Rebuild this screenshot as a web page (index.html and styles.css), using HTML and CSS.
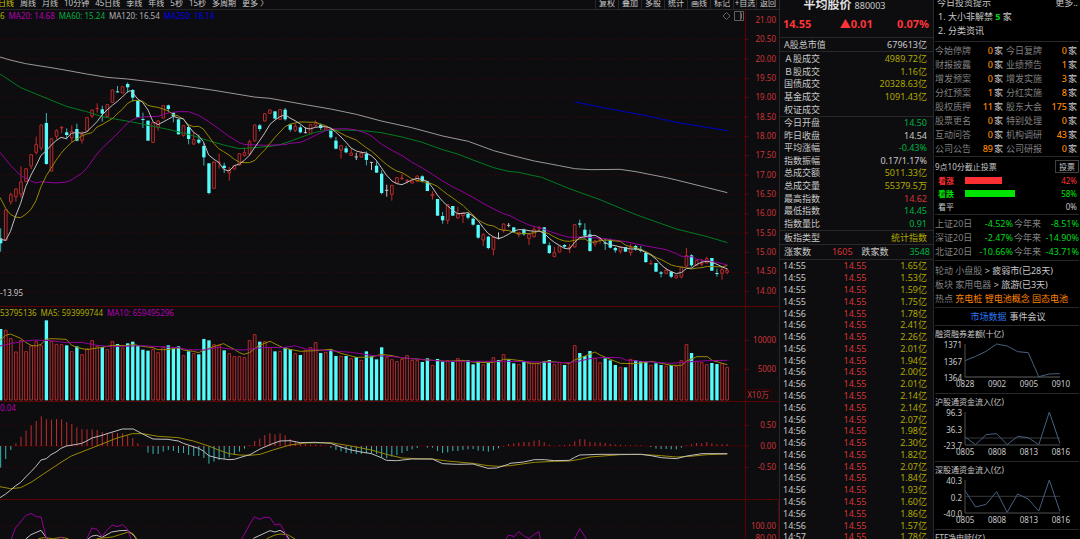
FILE: index.html
```html
<!DOCTYPE html>
<html lang="zh-CN">
<head>
<meta charset="utf-8">
<title>平均股价 880003</title>
<link rel="stylesheet" href="styles.css">
</head>
<body>
<main class="terminal">
  <section class="charts">
    <nav class="toolbar">
      <div class="periods">
        <button class="active">日线</button><button>周线</button><button>月线</button><button>10分钟</button><button>45日线</button><button>季线</button><button>年线</button><button>5秒</button><button>15秒</button><button>多周期</button><button>更多 〉</button>
      </div>
      <div class="tools">
        <button>复权</button><button>叠加</button><button>多股</button><button>统计</button><button>画线</button><button>标记</button><button>+自选</button><button>返回</button>
      </div>
    </nav>
    <div class="pane">
      <div class="plot">
        <svg id="price" viewBox="0 30 2235 888" preserveAspectRatio="none"></svg>
        <p class="legend"><span class="y">6</span><span class="m">MA20: 14.68</span><span class="g">MA60: 15.24</span><span class="w">MA120: 16.54</span><span class="b">MA250: 18.14</span></p>
        <svg class="marks" viewBox="0 0 22 12" width="22" height="12"><path d="M4.500 2.500L8 6L4.500 9.500L1 6Z"/><path d="M12.500 1.500H21.500V10.500H12.500ZM18.500 1.500V10.500"/><path class="bar" d="M19 3H20V9H19Z"/></svg>
        <span class="low">-13.95</span>
      </div>
      <div class="axis axis-price"><span>21.00</span><span>20.50</span><span>20.00</span><span>19.50</span><span>19.00</span><span>18.50</span><span>18.00</span><span>17.50</span><span>17.00</span><span>16.50</span><span>16.00</span><span>15.50</span><span>15.00</span><span>14.50</span><span>14.00</span></div>
    </div>
    <div class="pane">
      <div class="plot">
        <svg id="volume" viewBox="0 21 2235 282" preserveAspectRatio="none"></svg>
        <p class="legend top"><span class="y">53795136</span><span class="y">MA5: 593999744</span><span class="m">MA10: 659495296</span></p>
      </div>
      <div class="axis axis-volume"><span>10000</span><span>5000</span><span class="unit">X10万</span></div>
    </div>
    <div class="pane">
      <div class="plot">
        <svg id="macd" viewBox="0 306 2235 291" preserveAspectRatio="none"></svg>
        <p class="legend top"><span class="m">0.04</span></p>
      </div>
      <div class="axis axis-macd"><span>0.50</span><span>0.00</span><span>-0.50</span></div>
    </div>
    <div class="pane last">
      <div class="plot"><svg id="kdj" viewBox="0 600 2235 117" preserveAspectRatio="none"></svg></div>
      <div class="axis axis-kdj"><span>100.00</span><span>80.00</span></div>
    </div>
  </section>

  <section class="quote">
    <header class="head">
      <h1>平均股价 <small>880003</small></h1>
      <p class="last-price"><b>14.55</b><b>▲0.01</b><b>0.07%</b></p>
    </header>
    <dl class="one"><dt>A股总市值</dt><dd>679613亿</dd></dl>
    <dl class="turnover"><dt>Ａ股成交</dt><dd class="y">4989.72亿</dd><dt>Ｂ股成交</dt><dd class="y">1.16亿</dd><dt>国债成交</dt><dd class="y">20328.63亿</dd><dt>基金成交</dt><dd class="y">1091.43亿</dd><dt>权证成交</dt><dd></dd></dl>
    <dl class="stats"><dt>今日开盘</dt><dd class="g">14.50</dd><dt>昨日收盘</dt><dd>14.54</dd><dt>平均涨幅</dt><dd class="g">-0.43%</dd><dt>指数振幅</dt><dd>0.17/1.17%</dd><dt>总成交额</dt><dd class="y">5011.33亿</dd><dt>总成交量</dt><dd class="y">55379.5万</dd><dt>最高指数</dt><dd class="r">14.62</dd><dt>最低指数</dt><dd class="g">14.45</dd><dt>指数量比</dt><dd class="g">0.91</dd></dl>
    <dl class="one"><dt>板指类型</dt><dd class="y">统计指数</dd></dl>
    <p class="breadth"><span>涨家数</span><span class="r">1605</span><span>跌家数</span><span class="g">3548</span></p>
    <div class="ticks"><table><tbody id="ticks"></tbody></table></div>
  </section>

  <aside class="info">
    <section class="tips">
      <p class="split"><span>今日投资提示</span><a href="#">更多..</a></p>
      <p class="item">1. 大小非解禁 <b class="up">5</b> 家</p>
      <p class="item">2. 分类资讯</p>
    </section>
    <section class="events" id="events"></section>
    <section class="vote">
      <p class="split"><span>9点10分截止投票</span><button>投票</button></p>
      <p class="choice red"><b>看涨</b><i><i class="fill" style="width:42%"></i></i><span>42%</span></p>
      <p class="choice green"><b>看跌</b><i><i class="fill" style="width:58%"></i></i><span>58%</span></p>
      <p class="choice"><span>看平</span><i></i><span>0%</span></p>
    </section>
    <section class="returns">
      <span>上证20日</span><b>-4.52%</b><span>今年来</span><b>-8.51%</b>
      <span>深证20日</span><b>-2.47%</b><span>今年来</span><b>-14.90%</b>
      <span>北证20日</span><b>-10.66%</b><span>今年来</span><b>-43.71%</b>
    </section>
    <section class="sectors">
      <p>轮动 小盘股 <em>&gt; 疲弱市(已28天)</em></p>
      <p>板块 家用电器 <em>&gt; 旅游(已3天)</em></p>
      <p>热点 <a href="#">充电桩</a> <a href="#">锂电池概念</a> <a href="#">固态电池</a></p>
    </section>
    <nav class="tabs"><button class="on">市场数据</button><button>事件会议</button></nav>
    <div id="minis"></div>
    <section class="mini"><h2>ETF净申赎(亿)</h2></section>
  </aside>
</main>
<script src="script.js"></script>
</body>
</html>
```
FILE: styles.css
```css
* { box-sizing: border-box; margin: 0; padding: 0; }
body {
  background: #0d0d0f;
  color: #c8c8c8;
  font: 9px/12px "Noto Sans", "Noto Sans CJK SC", sans-serif;
  overflow: hidden;
}
button { background: none; border: 0; color: inherit; font: inherit; white-space: nowrap; }
a { color: inherit; text-decoration: none; }
svg { display: block; }

.y { color: #b0a800; }
.m { color: #b400b4; }
.g { color: #00b044; }
.r { color: #d83438; }
.w { color: #b0b0b0; }
.b { color: #0000e8; }

.terminal {
  display: grid;
  grid-template-columns: minmax(0, 1fr) 154px 147px;
  height: 100vh;
}

/* chart column */
.charts {
  display: grid;
  grid-template-rows: 10px 297fr 95fr 98fr 39fr;
  min-height: 0;
}
.toolbar {
  display: flex;
  justify-content: space-between;
  align-items: flex-end;
  overflow: hidden;
  border-bottom: 1px solid #28282a;
  font-size: 8px;
  line-height: 12px;
}
.periods { display: flex; gap: 6px; margin-left: -2px; }
.periods .active { color: #c8c000; }
.tools { display: flex; }
.tools button { width: 23px; border-left: 1px solid #28282a; }

.pane {
  display: grid;
  grid-template-columns: minmax(0, 1fr) 34px;
  min-height: 0;
  border-bottom: 1px solid #5c0003;
}
.pane.last { border-bottom: 0; }
.plot { position: relative; min-height: 0; min-width: 0; }
.plot > svg:first-child { width: 100%; height: 100%; position: absolute; overflow: visible; }
.last .plot > svg:first-child { overflow: hidden; }
.legend {
  position: absolute;
  top: 0;
  left: 0;
  display: flex;
  gap: 4px;
  font-size: 8px;
  white-space: nowrap;
}
.low { position: absolute; left: 0; bottom: 7px; font-size: 8px; }
.marks { position: absolute; right: 1px; top: 0; fill: none; stroke: #606060; }
.marks .bar { fill: #606060; stroke: none; }

.axis {
  display: flex;
  flex-direction: column;
  align-items: flex-end;
  padding-right: 3px;
  min-height: 0;
  overflow: hidden;
  border-left: 1px solid #5c0003;
  color: #cc3438;
  font-size: 8px;
  line-height: 10px;
}
.axis-price { justify-content: space-between; padding-top: 5px; padding-bottom: 10px; }
.axis-volume { padding-top: 28px; gap: 19px; }
.axis-volume .unit { margin-top: -4px; padding: 0 2px 0 1px; margin-right: 4px; border-top: 1px solid #3c0003; border-right: 1px solid #3c0003; white-space: nowrap; }
.axis-macd { padding-top: 18px; gap: 11px; }
.axis-kdj { padding-top: 21px; gap: 2px; border-right: 1px solid #5c0003; padding-right: 2px; }

/* svg marks */
svg .grid { stroke: #42060a; stroke-width: 1; stroke-dasharray: 1 2; fill: none; vector-effect: non-scaling-stroke; }
svg .tickmark { stroke: #6c0408; stroke-width: 1; vector-effect: non-scaling-stroke; }
svg .zeroline { stroke: #400406; stroke-width: 1; vector-effect: non-scaling-stroke; }
svg .line { fill: none; stroke-width: 1; vector-effect: non-scaling-stroke; }
svg .up { fill: #0d0d0f; stroke: #b82a2c; stroke-width: 1; vector-effect: non-scaling-stroke; }
svg .down { fill: #54fcfc; }
svg .wick { stroke-width: 1; vector-effect: non-scaling-stroke; }
svg .wick.u { stroke: #c02c2e; }
svg .wick.d { stroke: #3cb4b4; }
svg .wick.n { stroke: #c0c0c0; }

/* quote column */
.quote {
  display: flex;
  flex-direction: column;
  min-height: 0;
  overflow: hidden;
  border-left: 1px solid #28282a;
  line-height: 12px;
}
.head { height: 38px; border-bottom: 1px solid #28282a; overflow: hidden; }
.head h1 { margin-top: -5px; text-align: center; font-size: 12px; line-height: 19px; color: #e0e0e0; padding-right: 24px; }
.head small { font-size: 9px; font-weight: 400; color: #c8c8c8; }
.last-price { display: flex; justify-content: space-between; padding: 0 4px 0 3px; font-size: 11px; line-height: 18px; color: #ff3438; }
.last-price b:nth-child(2) { padding-left: 4px; }
.quote dl {
  display: grid;
  grid-template-columns: auto 1fr;
  grid-auto-rows: 1fr;
  align-items: center;
  flex: none;
  padding: 0 6px 0 4px;
  border-bottom: 1px solid #28282a;
}
.quote dd { text-align: right; }
.quote .one { height: 14px; }
.quote .turnover { height: 65px; padding-top: 1px; }
.quote .stats { height: 114px; }
.breadth { display: flex; justify-content: space-between; padding: 0 3px 0 4px; height: 15px; line-height: 14px; flex: none; border-bottom: 1px solid #28282a; }
.breadth span:nth-child(2) { margin-left: 12px; }
.breadth span:nth-child(4) { margin-left: 12px; }
.ticks { flex: 1; min-height: 0; overflow: hidden; padding: 0 6px 0 3px; }
.ticks table { width: 100%; height: calc(100% + 4px); border-collapse: collapse; line-height: 11px; }
.ticks td { width: 33%; padding: 0; }
.ticks td:nth-child(2) { text-align: center; color: #d83438; }
.ticks td:nth-child(3) { text-align: right; color: #b0a800; }

/* information column */
.info { background: #000; border-left: 1px solid #28282a; padding: 0 1px; min-height: 0; overflow: hidden; line-height: 14px; white-space: nowrap; }
.info > section, .tabs { border-bottom: 1px solid #28282a; }
.split { display: flex; justify-content: space-between; }
.tips { display: flow-root; height: 42px; }
.tips .split { margin-top: -4px; padding: 0 1px 0 2px; }
.tips .item { padding-left: 3px; }
.tips .up { color: #00d81c; }
.events { display: grid; grid-template-columns: auto 32px auto 1fr; padding-top: 2px; color: #808080; }
.events span:nth-child(even) { text-align: right; color: #c8c8c8; }
.events span:nth-child(4n+3) { padding-left: 3px; }
.events span:nth-child(4n) { padding-right: 2px; }
.events b { color: #ff8800; font-weight: 500; margin-right: 1px; }
.vote { height: 58px; padding-top: 3px; font-size: 8px; }
.vote button { width: 24px; height: 13px; border: 1px solid #404040; font-size: 8px; line-height: 11px; }
.choice { display: grid; grid-template-columns: 27px 87px 1fr; align-items: center; padding: 0 2px 0 3px; line-height: 13px; }
.choice > i { height: 7px; }
.fill { display: block; height: 100%; background: currentColor; }
.choice span:last-child { text-align: right; }
.choice.red { color: #ff3034; }
.choice.green { color: #00e400; }
.returns { display: grid; grid-template-columns: 39px 39px auto 1fr; padding: 2px 0 1px; color: #808080; }
.returns b { font-weight: 400; text-align: right; color: #00d81c; }
.returns span:nth-child(4n+3) { padding-left: 1px; }
.sectors { padding: 3px 0 1px; color: #808080; }
.sectors em { font-style: normal; color: #c8c8c8; }
.sectors a { color: #ff8400; }
.tabs { display: flex; justify-content: center; gap: 3px; height: 18px; padding-left: 2px; }
.tabs .on { color: #2c74f0; }
.mini { padding-top: 2px; height: 68px; border-bottom: 1px solid #28282a; font-size: 8px; }
.mini h2 { font-size: 8px; font-weight: 400; line-height: 12px; }
.mini .body { display: grid; grid-template-columns: 27px 1fr; column-gap: 3px; padding-right: 19px; }
.mini .ylabels { display: flex; flex-direction: column; justify-content: space-between; height: 42px; line-height: 9px; text-align: right; }
.mini svg { width: 100%; height: 33px; margin-top: 4px; overflow: visible; fill: none; }
.mini .frame { stroke: #505050; vector-effect: non-scaling-stroke; }
.mini .zero { stroke: #383838; vector-effect: non-scaling-stroke; }
.mini .trend { stroke: #486080; vector-effect: non-scaling-stroke; }
.mini .xlabels { display: flex; justify-content: space-between; margin: -3px 9px 0 21px; line-height: 10px; }
```
FILE: script.js
```js
// One drawing unit is a third of a pixel at the default window width.
const STEP = 15.24;
const xAt = i => 2 + STEP * i;

// kind (r rising, c falling, w unchanged), body top, body bottom, high, low
const candles = `c 715 730 685 755|r 628 722|r 583 606 578 614|r 566 591 566 605|r 545 583 499 593|r 505 546|r 463 499 463 508|r 433 458 410 463|r 374 445 374 452|c 369 492 339 494|r 415 514|r 391 410 388 417|r 381 385 378 400|c 397 405 385 418|r 393 415 376 427|c 387 422 371 424|r 403 422 393 431|r 352 394|r 329 349 329 354|r 324 327 310 338|c 328 341 317 365|r 313 350|r 269 308|c 274 277 258 278|r 259 280|c 252 262 247 278|c 270 293 267 305|c 302 352|c 357 360 338 384|c 362 422|r 367 428|r 362 383 360 392|r 316 355|c 316 327 314 337|c 338 349 336 367|c 358 403|r 376 407 376 410|c 381 417 376 433|r 418 433 396 435|c 419 428 404 432|c 438 472 430 497|c 490 579 490 583|r 485 566|r 486 489 461 506|c 497 504 488 519|r 510 520 501 542|r 495 508|r 460 496|r 457 467 443 470|r 424 463 419 467|r 374 424|c 376 387 372 394|r 340 364|r 329 341|c 334 356|r 328 359|c 329 358 324 362|c 373 389 371 395|r 378 392 371 396|c 382 397 376 400|w 398 398 382 400|r 373 402|r 368 377 361 381|c 374 384 370 390|r 382 389|c 387 412 385 416|c 422 446 411 448|r 436 451 436 476|c 445 457 438 460|r 458 467 445 467|w 471 471 458 480|r 459 472 453 474|c 462 480 454 496|w 487 487 486 510|c 497 518 485 518|c 521 579 511 583|w 571 571 554 590|r 555 584 555 602|r 532 550|r 533 536 521 540|r 541 544 537 550|r 542 550|r 527 545|c 529 543 526 547|c 544 573|r 582 588 574 599|c 597 647|c 648 661 636 671|r 613 662 613 672|c 618 647|r 641 655 620 655|r 638 648 636 669|c 642 653 636 658|c 656 674 652 677|c 675 713 673 716|r 703 721 700 738|c 710 744 708 748|r 710 749 710 766|w 715 715 697 718|r 671 691 671 698|w 676 676 669 682|c 682 697|r 696 704 696 712|c 689 703 686 707|r 702 716 702 735|r 688 711 680 713|r 682 686 678 692|c 682 731|c 736 759 727 762|r 757 771 741 771|r 737 757|c 735 740 733 745|r 741 745 732 759|r 673 742|c 670 674 659 683|c 689 707 670 715|c 703 753 689 755|r 722 733 720 740|r 718 722 712 731|c 728 731 716 750|c 720 743 716 745|c 744 751 740 758|r 741 754 738 761|c 741 755|r 742 759 732 767|c 738 748 735 752|c 748 752 738 757|c 759 786 757 789|r 789 793 780 793|c 789 815|c 817 821 813 832|r 810 821 803 823|c 815 830 813 834|r 825 835|r 801 832 801 835|r 766 799 744 801|c 766 796 763 800|r 780 797|r 789 794 777 799|r 775 790 770 790|c 774 812|c 819 822 806 830|r 808 821 800 839|r 810 818 804 823`
  .split('|').map(s => { const [k, ...n] = s.split(' '); const v = n.map(Number); return { k, t: v[0], b: v[1], h: v[2] ?? v[0], l: v[3] ?? v[1] }; });

const volumes = [87,90,115,155,121,154,137,124,136,61,123,132,133,136,154,139,163,145,121,139,141,148,124,132,143,130,125,135,149,152,148,157,140,136,146,139,166,154,160,163,117,121,133,136,151,160,169,169,172,121,103,125,124,142,154,153,142,147,160,165,150,142,127,159,156,148,168,168,168,175,171,180,154,169,178,142,172,178,184,177,166,180,181,186,175,195,177,185,181,186,175,183,181,193,183,193,189,172,180,163,178,190,193,184,186,190,190,184,180,193,187,195,187,136,159,168,153,174,187,175,181,195,202,202,177,181,183,183,195,190,195,198,195,198,181,133,159,183,187,193,189,192,190,201];
const fallingOnVolume = new Set([70, 73, 98, 100]);

const histogram = [503,477,450,430,410,392,376,363,349,358,359,357,358,366,372,382,388,388,388,390,396,399,398,399,400,406,414,430,438,458,462,462,455,450,453,459,459,465,468,468,474,491,485,480,477,472,465,455,446,435,423,416,405,400,403,400,406,417,424,427,432,434,434,436,437,443,450,454,459,460,462,462,460,460,462,473,475,470,465,459,453,448,444,438,443,443,453,459,457,453,453,450,448,447,452,453,455,451,445,439,432,430,428,426,426,422,420,427,434,438,436,435,433,424,417,418,426,427,427,429,432,434,434,436,436,436,436,438,441,446,447,447,448,448,443,436,433,429,430,426,430,433,433,433];

// Each curve is a list of stretches: [x offset, points].
const join = parts => parts.flatMap(([dx, s]) => s.split(' ').map(p => { const [x, y] = p.split(',').map(Number); return `${x + dx},${y}`; })).join(' ');
const curve = (color, ...parts) => `<polyline class="line" stroke="${color}" points="${join(parts)}"/>`;
const grid = ys => ys.map(y => `<path class="grid" d="M0 ${y}H2235"/><path class="tickmark" d="M2235 ${y}h10"/>`).join('');
const W = '#c0c0c0', Y = '#988800', M = '#94009c', G = '#007c20';

let out = grid([118,177,236,293,351,409,467,525,583,642,699,757,817,874]);
for (let y = 90; y < 870; y += 58) out += `<path class="tickmark" d="M2235 ${y}h5"/>`;
candles.forEach((c, i) => {
  const x = xAt(i), w = c.k === 'r' ? 'u' : c.k === 'c' ? 'd' : 'n';
  out += `<path class="wick ${w}" d="M${x} ${c.h}V${c.l}"/>`;
  if (c.k === 'w') out += `<path class="wick n" d="M${x - 5} ${c.t}H${x + 5}"/>`;
  else if (c.k === 'c') out += `<rect class="down" x="${x - 5}" y="${c.t}" width="10" height="${c.b - c.t}"/>`;
  else out += `<rect class="up" x="${x - 4}" y="${c.t + 1}" width="8" height="${Math.max(1, c.b - c.t - 2)}"/>`;
});
out += curve('#989898', [0, '0,171 30,180 77,191 153,203 183,208 260,222 321,232 382,237 459,246 535,256 642,271 763,291 809,295'], [750, '105,303 166,314 242,327 319,343 394,363 485,383 578,408 655,424 731,452'], [1530, '0,465 73,483 148,497 194,506 240,509 330,508 378,515 469,533 499,540 592,563 652,578']);
out += curve(G, [0, '0,222 62,263 123,288 199,319 260,335 306,350 351,358 397,366 444,376 504,388 565,403 626,422 671,435 718,446 750,444'], [750, '60,439 90,434 120,424 166,407 196,397 227,391 288,390 349,393 394,398 456,411 517,427 547,438 578,449 623,462 669,480 731,503 775,514'], [1530, '26,517 57,524 95,532 178,566 270,599 378,644 499,687 592,710 652,728']);
out += curve('#0000c8', [1530, '194,306 316,330 408,347 499,367 592,382 652,392']);
out += curve(M, [0, '0,457 31,495 62,527 93,543 108,549 123,545 168,549 199,546 214,540 245,520 260,505 291,462 306,445 351,402 367,385 382,370 397,360 413,353 428,351 474,349 489,344 504,339 535,335 565,335 596,346 626,365 656,386 687,409 718,428 732,433 748,434'], [750, '45,436 105,434 120,430 151,427 166,421 180,414 196,406 212,399 227,392 242,387 288,386 319,390 349,400 364,408 394,432 426,451 456,467 485,486 517,504 547,523 578,543 607,560 639,576 669,592 699,610 731,627 760,641'], [1530, '0,647 26,661 57,675 87,683 118,694 148,704 178,712 225,711 285,716 347,725 408,738 469,749 499,761 515,769 545,770 561,778 592,783 621,787 652,795']);
out += curve(Y, [0, '0,592 17,625 31,643 46,651 62,653 77,643 93,628 108,602 123,560 139,527 153,505 168,481 183,460 199,442 214,428 230,417 245,408 260,402 276,398 291,381 306,374 321,365 337,356 351,342 367,328 382,311 397,302 413,301 428,304 444,316 459,320 474,322 489,327 504,332 520,344 535,348 550,358 565,374 580,380 596,379 610,387 626,409 642,431 656,446 671,455 687,465 703,478 718,486 732,488 748,488'], [750, '15,481 30,464 45,449 60,430 75,412 90,396 105,380 120,373 135,369 151,366 166,366 180,367 196,366 212,373 227,377 242,386 257,391 273,400 288,408 303,414 319,420 334,432 349,443 364,453 378,465 394,480 409,493 426,505 440,513 456,518 471,527 485,536 501,541 517,545 532,548 547,552 562,559 578,572 592,583 607,593 623,605 639,616 653,630 669,645 685,660 699,668 714,675 731,678 746,687 760,691 775,691'], [1530, '11,697 26,702 41,700 57,701 73,698 87,693 103,696 118,702 133,711 148,718 163,723 178,724 194,721 209,717 225,717 240,727 255,726 270,722 285,720 301,721 316,723 331,724 347,736 362,740 377,743 392,748 408,755 423,763 439,773 454,779 469,787 484,795 499,799 515,801 530,804 545,807 561,804 576,803 592,799 606,800 621,800 637,801 652,796']);
out += curve(W, [0, '0,718 17,721 31,695 46,650 62,610 77,560 93,525 108,497 123,466 139,452 153,436 168,422 183,412 199,416 214,400 230,397 245,400 260,396 276,380 291,365 306,345 321,330 337,316 351,305 367,291 382,276 390,272 397,276 413,297 428,307 444,330 459,365 474,374 489,366 504,358 520,349 535,354 550,356 565,378 580,396 596,408 610,425 626,465 642,478 656,487 671,508 687,513 703,497 718,492 732,482 748,466'], [750, '15,441 30,420 45,398 60,373 75,360 90,350 105,344 120,354 135,362 151,372 166,384 180,387 196,382 212,380 227,380 242,384 257,396 273,411 288,427 303,444 319,453 334,457 349,459 364,467 378,480 394,503 409,525 426,543 440,551 456,554 471,547 485,540 501,535 517,539 532,544 547,562 562,585 578,604 592,617 607,630 623,641 639,640 653,638 669,648 685,663 699,682 714,700 731,711 746,716 760,711 775,703'], [1530, '11,693 26,689 41,689 57,692 73,694 87,693 103,700 118,715 133,727 148,736 163,745 178,747 194,727 209,713 225,710 240,707 255,706 270,714 285,728 301,735 316,737 331,741 347,744 362,747 377,747 392,750 408,758 423,765 439,778 454,795 469,807 484,815 499,821 515,817 530,805 545,804 561,793 576,786 592,784 606,787 621,793 637,801 652,807']);
document.getElementById('price').innerHTML = out;

out = grid([121, 209]);
volumes.forEach((y, i) => {
  const x = xAt(i), falling = candles[i].k === 'c' || fallingOnVolume.has(i);
  out += falling ? `<rect class="down" x="${x - 5}" y="${y}" width="10" height="${301 - y}"/>`
    : `<rect class="up" x="${x - 4}" y="${y + 1}" width="8" height="${299 - y}"/>`;
});
out += curve(Y, [0, '0,121 17,106 31,102 62,115 77,127 93,136 108,138 123,133 139,118 153,116 199,118 214,135 230,142 260,149 306,142 337,136 382,137 397,133 428,139 459,143 474,149 504,149 535,143 550,150 580,154 596,158 626,145 656,135 671,131 687,140 703,148 718,158 732,163 748,158 778,136'], [750, '60,124 90,139 105,145 151,154 196,152 242,148 273,160 319,172 364,171 394,163 426,167 456,174 501,177 547,181 592,184 639,181 669,186 714,188 746,184 760,178 775,178'], [1530, '0,178 41,183 57,190 87,190 103,184 148,187 178,190 194,180 225,168 255,156 270,165 301,178 331,190 377,191 423,184 454,190 484,196 515,196 530,183 561,170 592,170 606,181 637,190 652,194']);
out += curve(M, [0, '0,138 31,131 77,123 108,120 153,122 199,128 245,127 291,136 337,140 428,137 474,140 535,143 565,149 610,150 656,142 703,149 732,150 763,145 809,142'], [750, '90,143 105,142 135,137 166,147 242,152 303,157 364,166 426,170 517,179 592,184 669,184 731,184'], [1530, '0,184 178,188 209,183 240,176 285,172 331,173 347,180 392,184 484,190 530,186 592,182 652,181']);
document.getElementById('volume').innerHTML = out;

out = grid([376, 502]) + '<path class="zeroline" d="M0 438H2235"/><path class="tickmark" d="M2235 438h10M2235 407h5M2235 470h5"/>';
histogram.forEach((y, i) => { if (y !== 438) out += `<path class="wick ${y < 438 ? 'u' : 'd'}" d="M${xAt(i)} 438V${y}"/>`; });
out += curve(Y, [0, '0,560 31,566 62,563 93,547 123,527 153,507 183,487 214,468 260,450 306,432 351,414 397,401 428,401 474,409 535,413 580,423 626,438 656,450 687,461 718,465'], [750, '0,466 30,463 75,448 120,435 166,429 242,428 303,438 364,450 409,463 456,474 501,476 547,477 592,483 669,490 714,497 746,499'], [1530, '0,497 73,487 133,484 178,483 209,478 240,471 331,464 392,463 454,467 499,471 540,469 592,464 652,462']);
out += curve(W, [0, '0,593 17,582 31,571 46,558 62,547 77,531 93,515 108,499 123,480 139,476 153,464 168,456 183,445 199,438 230,433 245,430 260,423 276,414 291,410 306,406 321,401 351,392 367,387 400,387 428,402 459,417 504,418 535,423 550,430 580,440 596,445 610,453 626,467 656,475 687,479 703,478 732,469'], [750, '0,464 30,447 60,434 90,423 120,422 151,428 196,427 242,430 273,441 303,450 334,456 364,461 394,473 409,481 440,482 485,477 547,477 578,491 623,493 669,492 714,505 740,504 775,493'], [1530, '0,490 41,486 73,479 103,479 133,482 178,481 194,472 209,465 270,463 392,463 423,467 454,473 499,476 530,468 576,461 652,461']);
document.getElementById('macd').innerHTML = out;

out = grid([678]);
out += curve(W, [0, '77,717 93,704 123,691 139,713 150,724']) + curve(W, [0, '260,720 276,708 290,706 306,712 335,696 360,692 382,691 400,705 410,718']) + curve(W, [750, '10,715 60,692 75,696 90,691 105,700 118,718']);
out += curve(Y, [0, '115,716 130,713 160,716 183,712 205,716']) + curve(Y, [0, '290,716 337,711 382,697 398,700 410,716']) + curve(Y, [750, '50,716 75,705 90,702 115,705 135,717']);
out += curve(M, [0, '34,717 46,684 77,647 93,640 108,650 123,651 139,714 145,722 170,722 183,710 195,722']) + curve(M, [0, '260,717 276,684 291,688 306,710 321,690 337,675 351,680 367,674 382,686 397,728']) + curve(M, [0, '724,720 748,675 763,650 778,658 794,652 809,652'], [750, '75,675 90,672 105,697 115,725']) + curve(M, [750, '768,717 775,706 790,708'], [1530, '10,712 26,695 45,710 57,716 73,703 87,695 92,722']) + curve(M, [1530, '192,720 209,686 225,710 230,722']);
document.getElementById('kdj').innerHTML = out;

const tickVolumes = ['1.65','1.53','1.59','1.75','1.78','2.41','2.26','2.01','1.94','2.00','2.01','2.14','2.14','2.07','1.98','2.30','1.82','2.07','1.84','1.93','1.60','1.86','1.57','1.78'];
document.getElementById('ticks').innerHTML = tickVolumes.map((v, i) =>
  `<tr><td>${i < 4 ? '14:55' : i < 23 ? '14:56' : '14:57'}</td><td>14.55</td><td>${v}亿</td></tr>`).join('');

const events = [['今始停牌',0],['今日复牌',0],['财报披露',0],['业绩预告',1],['增发预案',0],['增发实施',3],['分红预案',1],['分红实施',8],['股权质押',11],['股东大会',175],['股票更名',0],['特别处理',0],['互动问答',0],['机构调研',43],['公司公告',89],['公司研报',0]];
document.getElementById('events').innerHTML = events.map(([k, n]) => `<span>${k}</span><span><b>${n}</b>家</span>`).join('');

const minis = [
  { title: '融资融券差额(十亿)', y: ['1371','1367','1364'], x: ['0828','0902','0905','0910'], v: [50,37,22,0,6,23,26,98,90,89], zero: 99 },
  { title: '沪股通资金流入(亿)', y: ['96.3','36.3','-23.7'], x: ['0805','0808','0813','0816'], v: [75,98,68,65,98,73,77,98,0,94], zero: 78 },
  { title: '深股通资金流入(亿)', y: ['40.3','0.2','-40.0'], x: ['0805','0808','0813','0816'], v: [32,81,73,35,97,42,57,93,0,94], zero: 49 }
];
document.getElementById('minis').innerHTML = minis.map(m => `<section class="mini"><h2>${m.title}</h2>
  <div class="body"><div class="ylabels">${m.y.map(t => `<span>${t}</span>`).join('')}</div>
  <svg viewBox="0 0 283 99" preserveAspectRatio="none"><path class="frame" d="M0 0V99H283"/><path class="zero" d="M0 ${m.zero}H283"/><polyline class="trend" points="${m.v.map((y, i) => `${i * 31.4},${y}`).join(' ')}"/></svg></div>
  <div class="xlabels">${m.x.map(t => `<span>${t}</span>`).join('')}</div></section>`).join('');
```
